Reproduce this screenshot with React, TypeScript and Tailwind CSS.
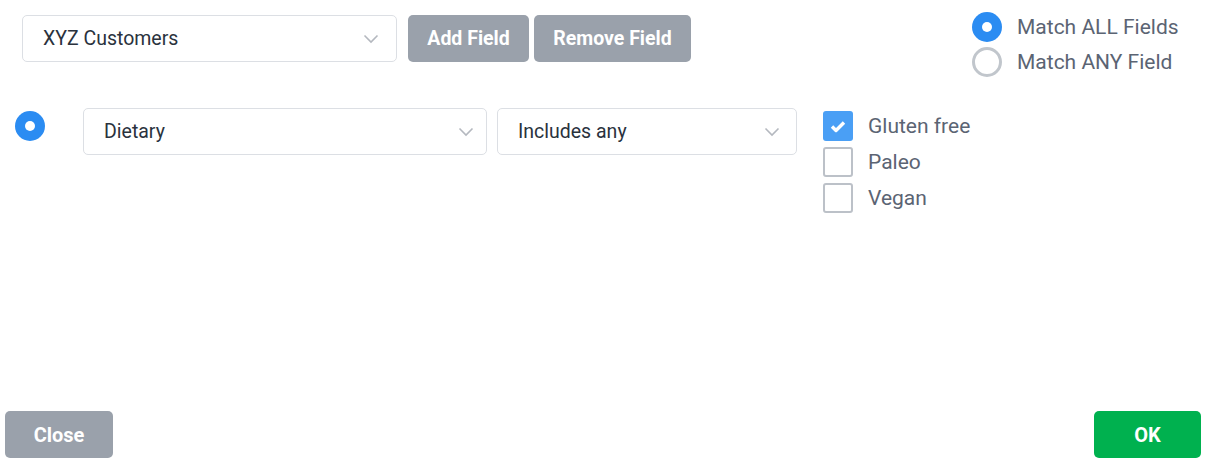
import React from "react";

const font = { fontFamily: "Roboto, 'Noto Sans', sans-serif" };

const Chevron = () => (
    <svg width="16" height="10" viewBox="0 0 16 10" className="shrink-0">
        <path d="M1.5 1.5 L8 8 L14.5 1.5" fill="none" stroke="#b4b8bf" strokeWidth="1.6" />
    </svg>
);

interface SelectProps {
    label: string;
    width: string;
    chevronPad: string;
}

const SelectBox: React.FC<SelectProps> = ({ label, width, chevronPad }) => {
    return (
        <div className={`${width} ${chevronPad} h-[47px] flex items-center justify-between pl-5 border border-[#dcdfe4] rounded-[5px] bg-white`}>
            <span className="text-[19.5px] leading-[30px] text-[#2a323d]">{label}</span>
            <Chevron />
        </div>
    );
};

const Radio = ({ checked }: { checked: boolean }) =>
    checked ? (
        <div className="w-[30px] h-[30px] rounded-full bg-[#2b8cf2] flex items-center justify-center shrink-0">
            <div className="w-[10px] h-[10px] rounded-full bg-white" />
        </div>
    ) : (
        <div className="w-[30px] h-[30px] rounded-full border-[3px] border-[#c1c6cc] bg-white shrink-0" />
    );

const Checkbox = ({ checked }: { checked: boolean }) =>
    checked ? (
        <div className="w-[30px] h-[30px] rounded-[3px] bg-[#4a9ff5] flex items-center justify-center shrink-0">
            <svg width="16" height="13" viewBox="0 0 16 13">
                <path d="M2 6.5 L6 10.5 L14 2.5" fill="none" stroke="white" strokeWidth="3.4" strokeLinejoin="round" />
            </svg>
        </div>
    ) : (
        <div className="w-[30px] h-[30px] rounded-[3px] border-2 border-[#bcc1c8] bg-white shrink-0" />
    );

const App: React.FC = () => {
    const options = [
        { label: "Gluten free", checked: true },
        { label: "Paleo", checked: false },
        { label: "Vegan", checked: false },
    ];
    return (
        <div className="w-[1207px] h-[471px] bg-white flex flex-col" style={font}>
            {/* top row */}
            <div className="flex flex-row items-start justify-between pl-[22px] pt-[12px]">
                <div className="flex flex-row items-center mt-[3px]">
                    <SelectBox label="XYZ Customers" width="w-[375px]" chevronPad="pr-[17px]" />
                    <button className="ml-[11px] w-[121px] h-[47px] rounded-[5px] bg-[#9aa1ab] text-white text-[19.5px] font-bold">Add Field</button>
                    <button className="ml-[5px] w-[157px] h-[47px] rounded-[5px] bg-[#9aa1ab] text-white text-[19.5px] font-bold">Remove Field</button>
                </div>
                <div className="w-[235px] flex flex-col gap-[5px]">
                    <div className="flex flex-row items-center gap-[15px] h-[30px]">
                        <Radio checked={true} />
                        <span className="text-[21px] leading-[30px] text-[#5b6473]">Match ALL Fields</span>
                    </div>
                    <div className="flex flex-row items-center gap-[15px] h-[30px]">
                        <Radio checked={false} />
                        <span className="text-[21px] leading-[30px] text-[#5b6473]">Match ANY Field</span>
                    </div>
                </div>
            </div>

            {/* condition row */}
            <div className="flex flex-row items-start mt-[31px] pl-[15px]">
                <div className="mt-[3px]">
                    <Radio checked={true} />
                </div>
                <div className="ml-[38px]">
                    <SelectBox label="Dietary" width="w-[404px]" chevronPad="pr-[12px]" />
                </div>
                <div className="ml-[10px]">
                    <SelectBox label="Includes any" width="w-[300px]" chevronPad="pr-[16px]" />
                </div>
                <div className="ml-[26px] mt-[3px] flex flex-col gap-[6px]">
                    {options.map((o) => (
                        <div key={o.label} className="flex flex-row items-center gap-[15px] h-[30px]">
                            <Checkbox checked={o.checked} />
                            <span className="text-[21px] leading-[30px] text-[#5b6473]">{o.label}</span>
                        </div>
                    ))}
                </div>
            </div>

            {/* footer */}
            <div className="mt-auto flex flex-row justify-between pl-[5px] pr-[6px] pb-[13px]">
                <button className="w-[108px] h-[47px] rounded-[5px] bg-[#9aa1ab] text-white text-[20px] font-bold">Close</button>
                <button className="w-[107px] h-[47px] rounded-[5px] bg-[#00b14f] text-white text-[20px] font-bold">OK</button>
            </div>
        </div>
    );
};

export default App;
